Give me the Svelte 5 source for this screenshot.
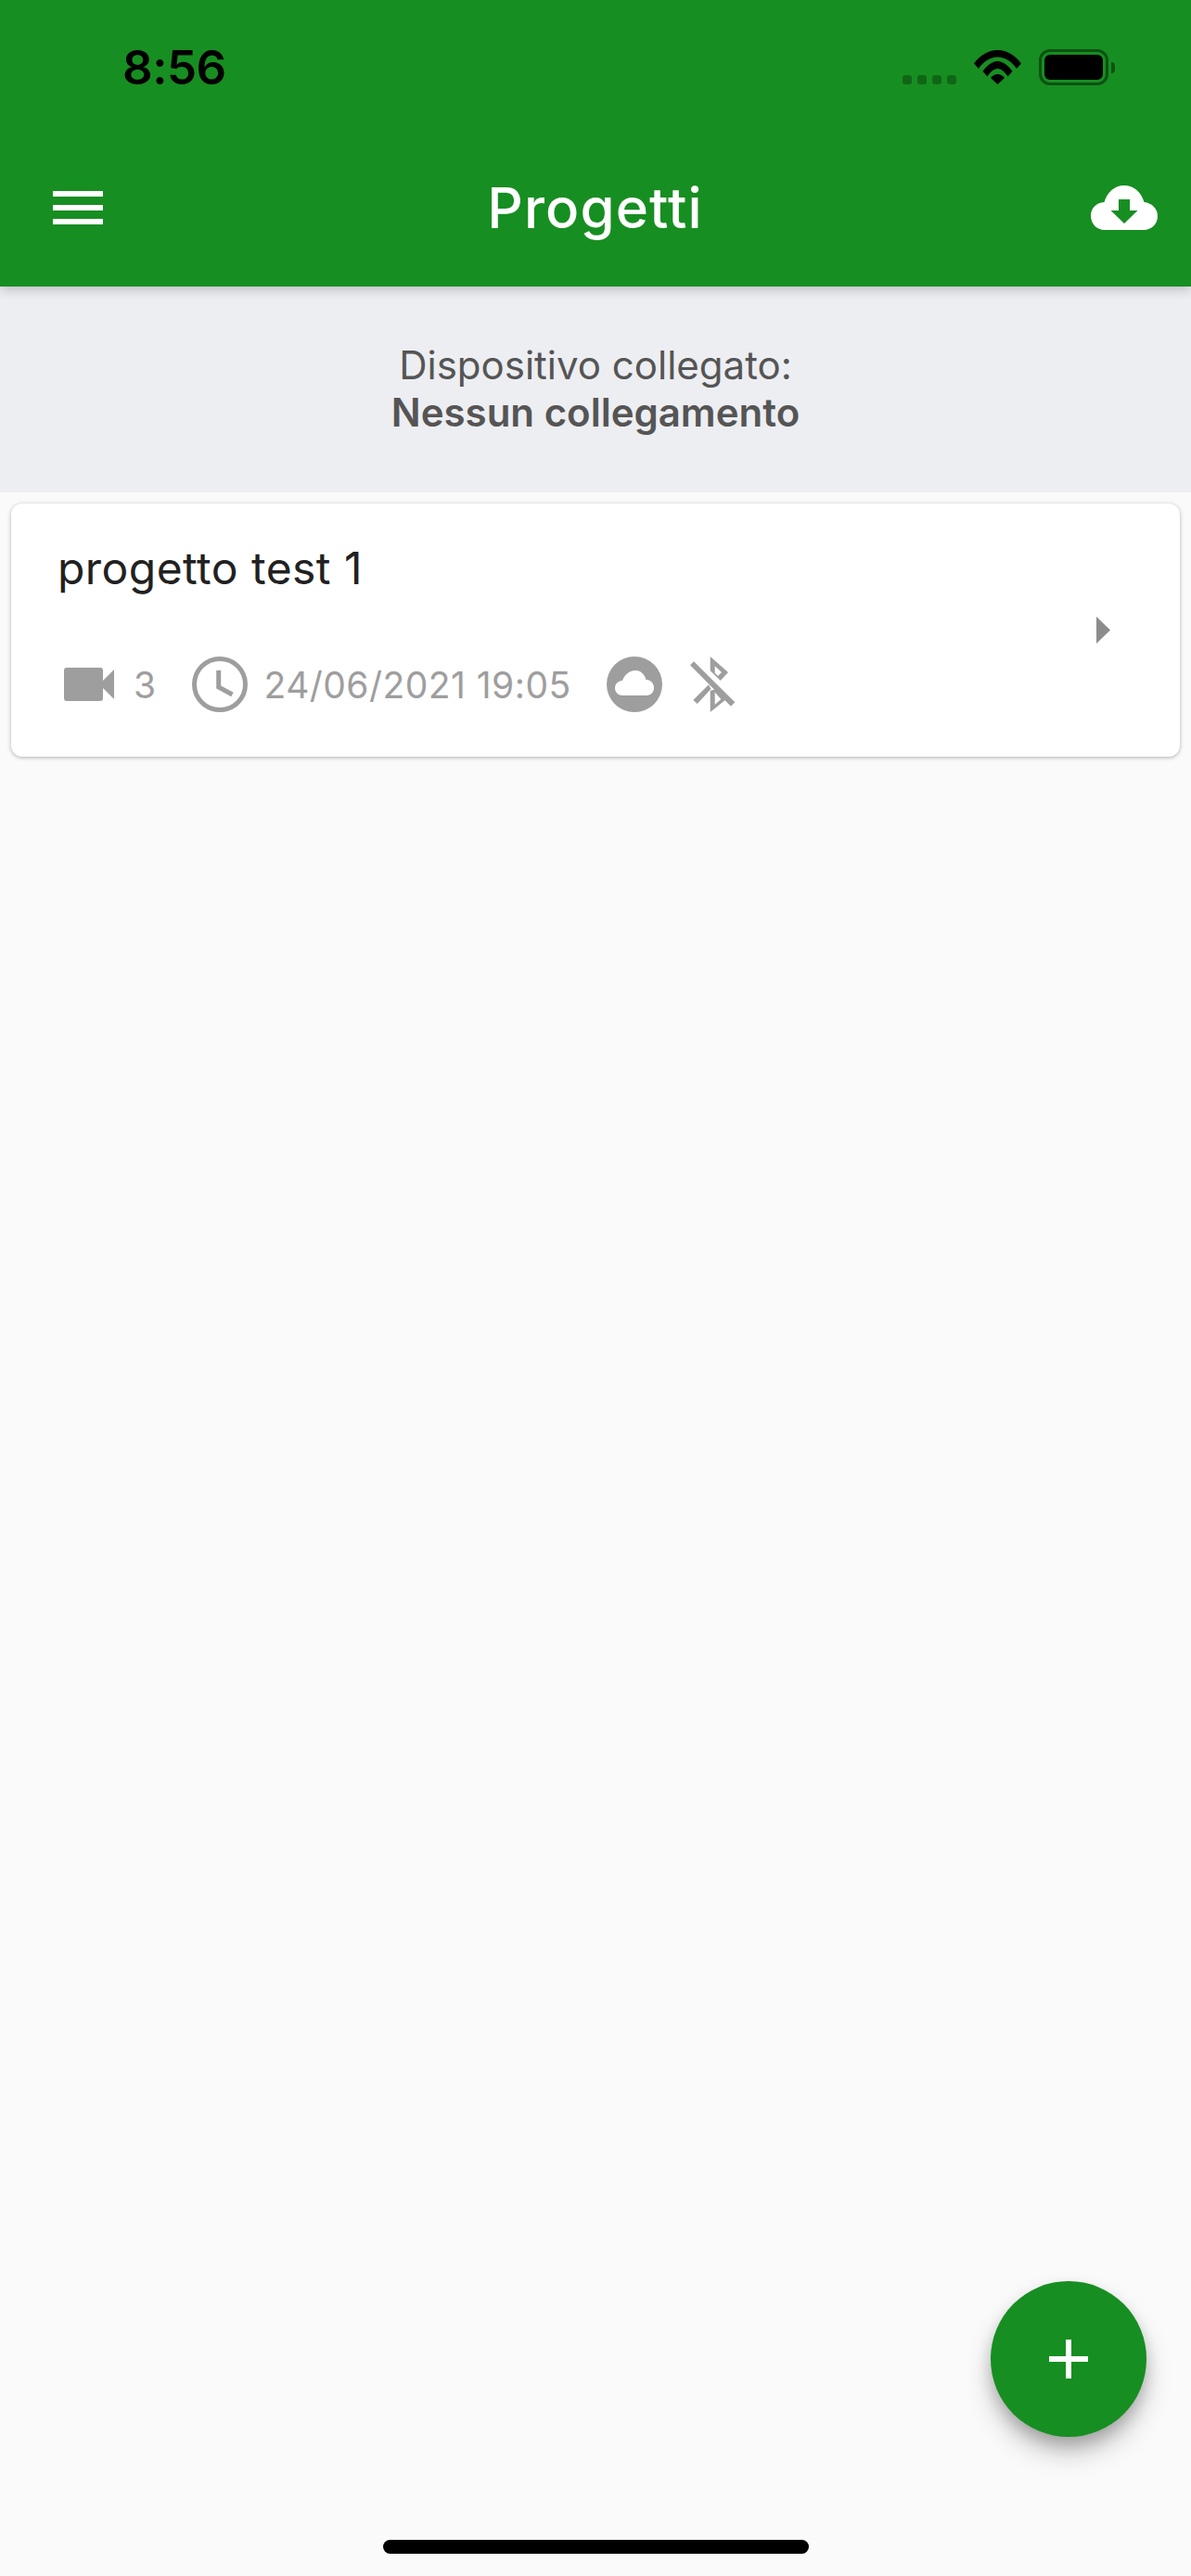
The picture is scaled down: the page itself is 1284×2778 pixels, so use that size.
<script lang="ts">
  const project = { name: "progetto test 1", videos: 3, date: "24/06/2021 19:05" };
</script>

<div class="screen">
  <header class="appbar">
    <div class="status">
      <span class="time">8:56</span>
      <div class="status-icons">
        <div class="signal" aria-hidden="true"><i></i><i></i><i></i><i></i></div>
        <svg class="wifi" viewBox="0 0 51 37" aria-hidden="true">
          <path d="M0 14.500C6.500 5.500 15.500 0 25.500 0S44.500 5.500 51 14.500L46 20C41 12.500 33.500 7.500 25.500 7.500S10 12.500 5 20Z" />
          <path d="M9.500 23C13.500 17 19.500 12 25.500 12S37.500 17 41.500 23L36.500 28.500C33.500 24 29.500 20 25.500 20S17.500 24 14.500 28.500Z" />
          <path d="M18 30C20 27.500 23 26 25.500 26S31 27.500 33 30L25.500 37Z" />
        </svg>
        <div class="battery" aria-hidden="true"><div class="cell"><div class="fill"></div></div><div class="nub"></div></div>
      </div>
    </div>
    <div class="toolbar">
      <button class="icon-btn" aria-label="Menu">
        <span class="burger"><i></i><i></i><i></i></span>
      </button>
      <h1>Progetti</h1>
      <button class="icon-btn" aria-label="Scarica dal cloud">
        <svg class="cloud-dl" viewBox="0 0 72 48" aria-hidden="true">
          <path fill-rule="evenodd" d="M15 48C6.500 48 0 41.500 0 32.500 0 24.500 6 18.500 14.500 18 17.500 7.500 25.500 0 36 0 46 0 54 6.500 57.500 18 66 19 72 25 72 33 72 41.500 65.500 48 57 48ZM30 15V27H21.500L36 41 50.500 27H42V15Z" />
        </svg>
      </button>
    </div>
  </header>

  <section class="device">
    <div>Dispositivo collegato:</div>
    <strong>Nessun collegamento</strong>
  </section>

  <article class="card">
    <div class="info">
      <div class="name">{project.name}</div>
      <div class="meta">
        <svg class="video" viewBox="0 0 54 36" aria-hidden="true">
          <path d="M3 0H39a3 3 0 0 1 3 3V33a3 3 0 0 1-3 3H3a3 3 0 0 1-3-3V3a3 3 0 0 1 3-3Z" />
          <path d="M42 14 54 2V34L42 22Z" />
        </svg>
        <span class="count">{project.videos}</span>
        <svg class="clock" viewBox="0 0 60 60" aria-hidden="true">
          <circle cx="30" cy="30" r="27.500" fill="none" stroke="currentColor" stroke-width="5" />
          <path d="M28.700 15V33L43.500 41" fill="none" stroke="currentColor" stroke-width="5" />
        </svg>
        <span class="date">{project.date}</span>
        <svg class="cloud" viewBox="0 0 60 60" aria-hidden="true">
          <path fill-rule="evenodd" d="M30 0a30 30 0 1 0 0 60a30 30 0 1 0 0-60ZM17 42C12 42 9 38 9 34 9 29.500 12.500 26.500 17 26 19 20.500 24 15 31 15 37 15 41.500 20 42.500 25 48 25 51 29.500 51 34 51 38 48 42 43 42Z" />
        </svg>
        <svg class="bt" viewBox="0 0 49 60" aria-hidden="true">
          <path d="M0 9.300 4 5.300 48.300 49.300 44 53.700Z" />
          <path fill-rule="evenodd" d="M21.700 0 41 17 32.700 26 21.700 15.300ZM26.700 10.300V17.700L30 21 34 17Z" />
          <path d="M3.300 47 20 30.300 22.500 35 7.700 51Z" />
          <path fill-rule="evenodd" d="M21.700 37V60L39 46 28 35ZM26.700 38.500 33.300 46 26.700 52Z" />
        </svg>
      </div>
    </div>
    <svg class="chevron" viewBox="0 0 15 29" aria-hidden="true"><path d="M0 0 15 14.500 0 29Z" /></svg>
  </article>

  <button class="fab" aria-label="Nuovo progetto">
    <span class="plus"></span>
  </button>
  <div class="home-indicator"></div>
</div>

<style>
  :global(body) {
    background: #fafafa;
  }

  .screen {
    position: relative;
    height: 2778px;
    overflow: hidden;
    background: #fafafa;
    font-family: Inter, "Liberation Sans", sans-serif;
  }

  .appbar {
    position: relative;
    z-index: 2;
    height: 309px;
    background: #178e21;
    box-shadow: 0 3px 12px rgba(0, 0, 0, 0.22);
  }

  .status {
    display: flex;
    justify-content: space-between;
    height: 150px;
    padding: 40px 82px 0 132px;
    box-sizing: border-box;
  }

  .time {
    font-size: 51px;
    font-weight: 600;
    line-height: 66px;
    color: #000;
    letter-spacing: -0.5px;
  }

  .status-icons {
    display: flex;
    align-items: flex-start;
    padding-top: 13px;
  }

  .signal {
    display: flex;
    gap: 6px;
    margin: 28px 19px 0 0;
  }

  .signal i {
    width: 10px;
    height: 10px;
    border-radius: 3px;
    background: rgba(0, 0, 0, 0.28);
  }

  .wifi {
    width: 51px;
    height: 37px;
    margin: 1px 19px 0 0;
    fill: #000;
  }

  .battery {
    display: flex;
    align-items: center;
  }

  .cell {
    width: 75px;
    height: 39px;
    padding: 3px;
    box-sizing: border-box;
    border: 3px solid rgba(0, 0, 0, 0.42);
    border-radius: 12px;
  }

  .fill {
    height: 100%;
    background: #000;
    border-radius: 6px;
  }

  .nub {
    width: 4px;
    height: 12px;
    margin-left: 3px;
    border-radius: 0 6px 6px 0;
    background: rgba(0, 0, 0, 0.42);
  }

  .toolbar {
    display: flex;
    align-items: center;
    justify-content: space-between;
    height: 150px;
    padding: 0 36px 0 57px;
    margin-top: -1px;
  }

  .toolbar h1 {
    margin: 0 0 0 -4px;
    font-size: 60px;
    font-weight: 500;
    letter-spacing: 1.100px;
    color: #fff;
    line-height: 1;
  }

  .icon-btn {
    display: flex;
    padding: 0;
    border: none;
    background: none;
  }

  .burger {
    display: flex;
    flex-direction: column;
    gap: 9px;
    width: 54px;
  }

  .burger i {
    height: 6px;
    background: #fff;
  }

  .cloud-dl {
    width: 72px;
    height: 48px;
    fill: #fff;
  }

  .device {
    display: flex;
    flex-direction: column;
    align-items: center;
    justify-content: center;
    height: 222px;
    padding-bottom: 3px;
    box-sizing: border-box;
    background: #edeef2;
    font-size: 42px;
    line-height: 51px;
    color: #555;
  }

  .device strong {
    font-weight: 600;
  }

  .card {
    display: flex;
    align-items: center;
    justify-content: space-between;
    height: 273px;
    margin: 12px 12px 0;
    padding: 0 75px 0 50px;
    box-sizing: border-box;
    background: #fff;
    border-radius: 12px;
    box-shadow: 0 1px 4px rgba(0, 0, 0, 0.3);
  }

  .info {
    align-self: flex-start;
    padding-top: 43px;
  }

  .name {
    font-size: 48px;
    line-height: 54px;
    letter-spacing: 0.450px;
    color: #212121;
  }

  .meta {
    display: flex;
    align-items: center;
    margin: 68px 0 0 7px;
    font-size: 39px;
    letter-spacing: 0.450px;
    color: #9e9e9e;
  }

  .meta svg {
    flex: none;
    fill: currentColor;
  }

  .video {
    width: 54px;
    height: 36px;
    margin-right: 21px;
  }

  .count {
    margin-right: 38px;
  }

  .clock {
    width: 60px;
    height: 60px;
    margin-right: 18px;
  }

  .date {
    margin-right: 38px;
  }

  .cloud {
    width: 60px;
    height: 60px;
    margin-right: 30px;
  }

  .bt {
    width: 49px;
    height: 60px;
  }

  .chevron {
    width: 15px;
    height: 29px;
    fill: #8c8c8c;
  }

  .fab {
    position: absolute;
    left: 1068px;
    top: 2460px;
    width: 168px;
    height: 168px;
    border: none;
    border-radius: 50%;
    background: #178e21;
    box-shadow: 0 18px 30px -3px rgba(0, 0, 0, 0.26), 0 8px 16px rgba(0, 0, 0, 0.16);
  }

  .plus {
    position: absolute;
    left: 63px;
    top: 63px;
    width: 42px;
    height: 42px;
    background:
      linear-gradient(#fff, #fff) center / 42px 6px no-repeat,
      linear-gradient(#fff, #fff) center / 6px 42px no-repeat;
  }

  .home-indicator {
    position: absolute;
    left: 413px;
    top: 2739px;
    width: 459px;
    height: 15px;
    border-radius: 8px;
    background: #000;
  }
</style>
